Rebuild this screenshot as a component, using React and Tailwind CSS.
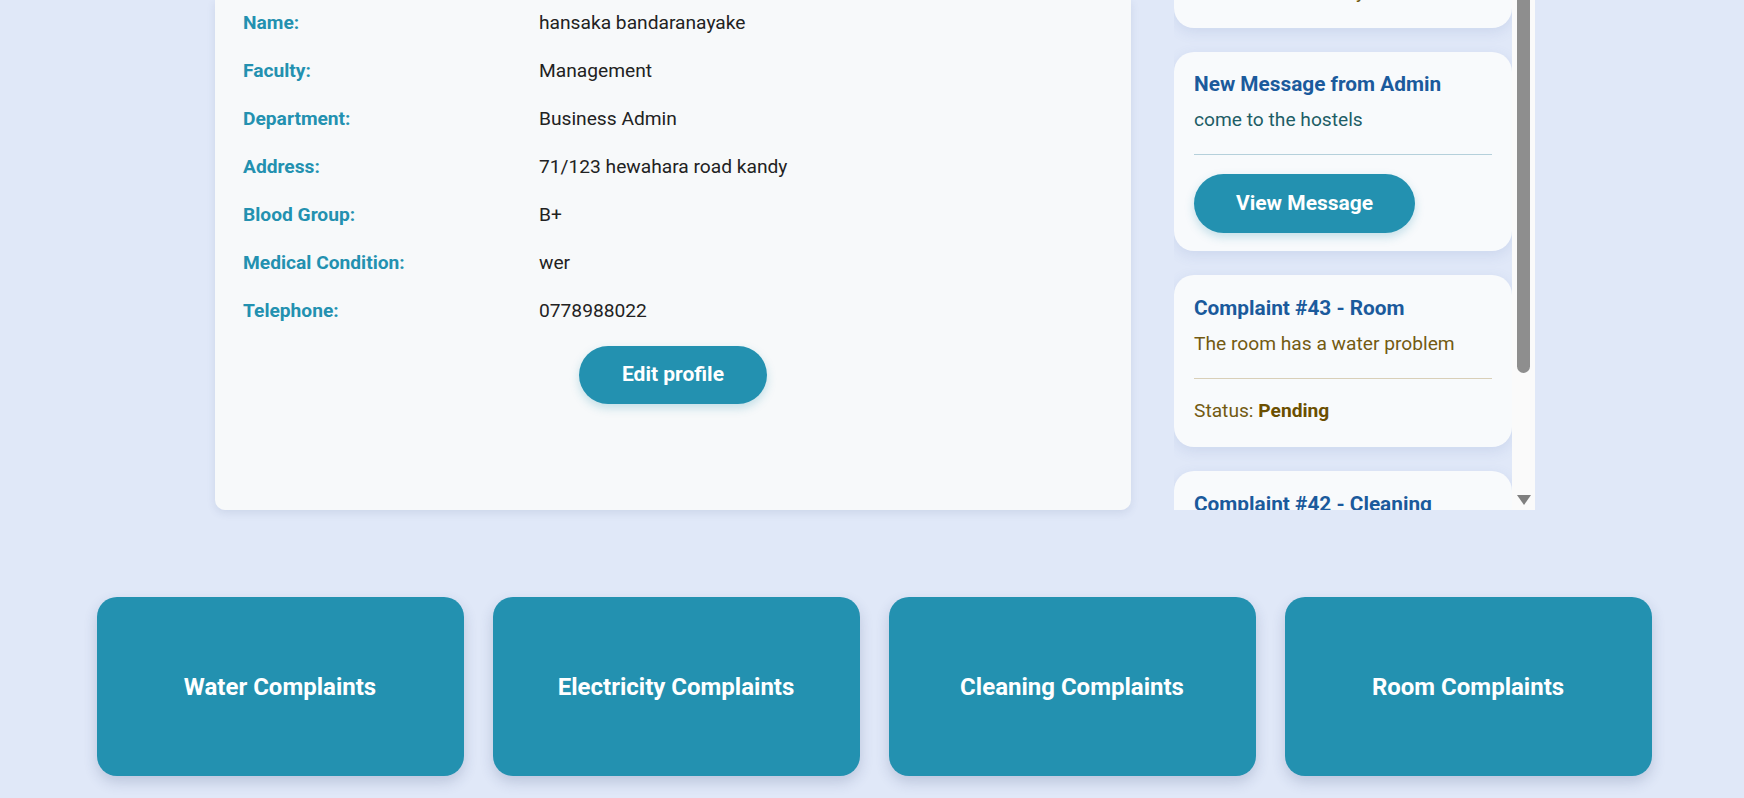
import React from 'react';

const profile = [
  ['Name:', 'hansaka bandaranayake'],
  ['Faculty:', 'Management'],
  ['Department:', 'Business Admin'],
  ['Address:', '71/123 hewahara road kandy'],
  ['Blood Group:', 'B+'],
  ['Medical Condition:', 'wer'],
  ['Telephone:', '0778988022'],
];

const tiles = ['Water Complaints', 'Electricity Complaints', 'Cleaning Complaints', 'Room Complaints'];

function MessageCard({ title, text }) {
  return (
    <div className="shrink-0 bg-[#f8fafc] rounded-[20px] px-5 pt-[20px] pb-[18px] shadow-[0_4px_14px_rgba(70,100,170,0.13)]">
      <h3 className="text-[#1b5a9c] font-bold text-[20.8px] leading-[24px]">{title}</h3>
      <p className="mt-[12px] text-[#1d5d66] text-[19.2px] leading-[24px]">{text}</p>
      <div className="mt-[22px] border-t border-[#b5d0db]" />
      <button className="mt-[19px] h-[59px] px-[42px] rounded-full bg-[#2391b0] text-white font-bold text-[21px] shadow-[0_4px_10px_rgba(35,145,176,0.25)]">
        View Message
      </button>
    </div>
  );
}

function ComplaintCard({ title, text, status }) {
  return (
    <div className="shrink-0 bg-[#f8fafc] rounded-[20px] px-5 pt-[21px] pb-[24px] shadow-[0_4px_14px_rgba(70,100,170,0.13)]">
      <h3 className="text-[#1b5a9c] font-bold text-[20.8px] leading-[24px]">{title}</h3>
      <p className="mt-[12px] text-[#735a12] text-[19.2px] leading-[24px]">{text}</p>
      <div className="mt-[22px] border-t border-[#d9cfb8]" />
      <p className="mt-[20px] text-[#735a12] text-[19.2px] leading-[24px]">
        Status: <span className="font-bold text-[#6b4f00]">{status}</span>
      </p>
    </div>
  );
}

export default function App() {
  return (
    <div className="min-h-screen bg-[#e0e8f8] pl-[6px] font-['Roboto',sans-serif]">
      <div className="w-[1320px] mx-auto flex gap-[43px] h-[510px]">
        {/* Profile details */}
        <div className="w-[916px] shrink-0 bg-[#f7f9fa] rounded-b-[10px] shadow-[0_3px_8px_rgba(60,80,130,0.12)] px-[28px]">
          <div className="-mt-[1px]">
            {profile.map(([label, value]) => (
              <div key={label} className="grid grid-cols-[296px_1fr] items-center h-[48px]">
                <span className="text-[#2391b0] font-bold text-[19.2px]">{label}</span>
                <span className="text-[#222] text-[19.2px]">{value}</span>
              </div>
            ))}
          </div>
          <div className="flex justify-center mt-[11px]">
            <button className="h-[58px] px-[43px] rounded-full bg-[#2391b0] text-white font-bold text-[21px] shadow-[0_4px_10px_rgba(35,145,176,0.25)]">
              Edit profile
            </button>
          </div>
        </div>

        {/* Notifications */}
        <div className="flex flex-1">
          <div className="w-[338px] overflow-hidden flex flex-col gap-[24px]">
            <div className="shrink-0 bg-[#f8fafc] rounded-[20px] px-5 -mt-[75px] pt-[19px] pb-[24px] shadow-[0_4px_14px_rgba(70,100,170,0.13)]">
              <p className="text-[#735a12] text-[19.2px] leading-[24px]">Status: <span className="font-bold">Solved</span></p>
              <p className="mt-[12px] text-[#735a12] text-[19.2px] leading-[24px]">Fixed the tank today</p>
            </div>
            <MessageCard title="New Message from Admin" text="come to the hostels" />
            <ComplaintCard title="Complaint #43 - Room" text="The room has a water problem" status="Pending" />
            <ComplaintCard title="Complaint #42 - Cleaning" text="The bathroom is not cleaned" status="Pending" />
          </div>
          <div className="w-[23px] bg-[#fafafa] flex flex-col items-center">
            <div className="w-[13px] h-[373px] bg-[#8e8e8e] rounded-b-[7px]" />
            <div className="flex-1" />
            <svg width="14" height="10" viewBox="0 0 14 10" className="mb-[5px]">
              <path d="M0 0 H14 L7 10 Z" fill="#7f7f7f" />
            </svg>
          </div>
        </div>
      </div>

      {/* Complaint categories */}
      <div className="flex justify-center gap-[29px] mt-[87px] -ml-[2px]">
        {tiles.map((t) => (
          <div
            key={t}
            className="w-[367px] h-[179px] rounded-[20px] bg-[#2391b0] flex items-center justify-center shadow-[0_6px_14px_rgba(40,60,110,0.2)]"
          >
            <span className="text-white font-bold text-[24px]">{t}</span>
          </div>
        ))}
      </div>
    </div>
  );
}
